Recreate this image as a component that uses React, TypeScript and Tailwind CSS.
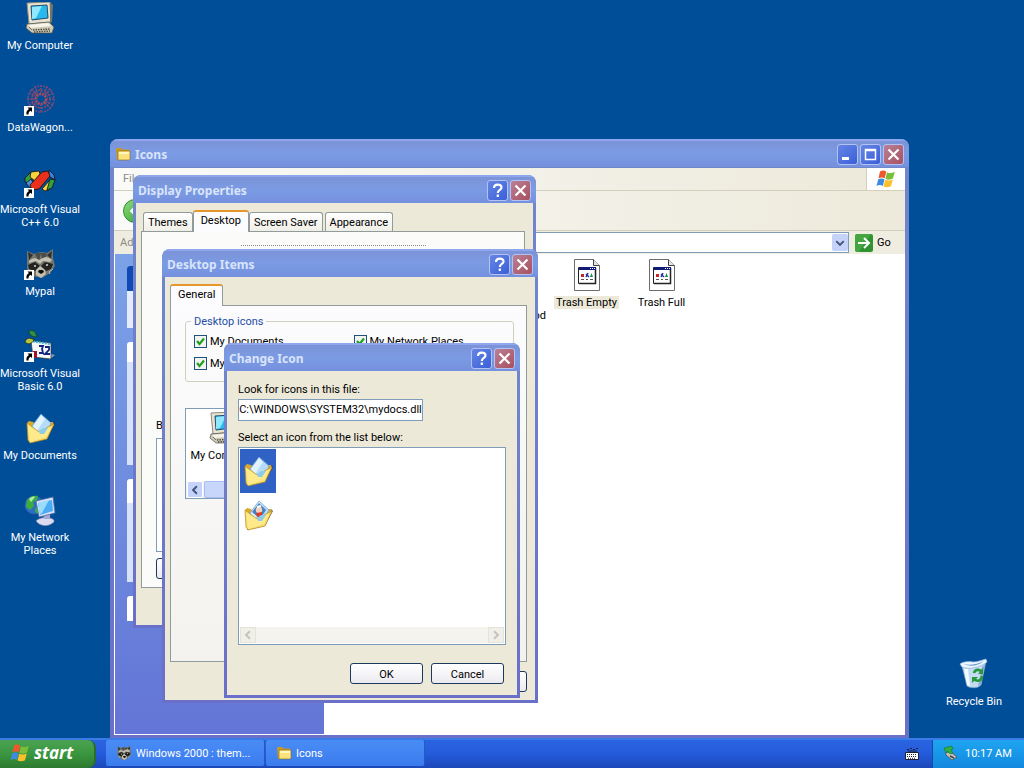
import React, { useState } from 'react';
import clsx from 'clsx';

type IconProps = { className?: string };

function ComputerIcon({ className }: IconProps) {
  return (
    <svg viewBox="0 0 32 32" className={className} aria-hidden="true">
      <path d="M3 1l23-1 1 20-22 2z" fill="#e8e4d2" stroke="#8d8a7c" strokeWidth="1" />
      <path d="M26 0l3 3-1 17-2 1z" fill="#77756a" />
      <path d="M7 4l16-1 1 13-16 2z" fill="#28b9ee" stroke="#2b4a68" strokeWidth="1" />
      <path d="M8 5l10-1-6 12-4 1z" fill="#8fe8fb" />
      <path d="M3 22l22-2 5 5-2 6-20 0-6-5z" fill="#cfcab5" stroke="#55534a" strokeWidth=".7" />
      <path d="M4 23l20-2 3 3-20 2z" fill="#f7f5ea" />
      <path d="M9 28l17-1M10 30l16-1" stroke="#4b4a45" strokeWidth="1.4" strokeDasharray="1.5 1" />
      <path d="M5 25l3 3" stroke="#77756a" />
    </svg>
  );
}

function DocumentsIcon({ className, picture = false }: IconProps & { picture?: boolean }) {
  return (
    <svg viewBox="0 0 32 32" className={className} aria-hidden="true">
      <path d="M5 31l18-4 8-15-2-2-7 15-17 4z" fill="#1d2430" opacity=".7" />
      <path d="M3 11l2-2 4 1 2 2 10-2 8 0 1 3-8 12-17 4z" fill="#dba92e" />
      <path d="M8 14l9-12 10 9-6 14-12-3z" fill="#b5dcf8" stroke="#6d9fd0" strokeWidth=".7" />
      <path d="M9 14l8-11 4 4-8 12z" fill="#e0f3ff" />
      {picture && (
        <g>
          <path d="M10 13l7-9 7 7-6 9z" fill="#477fc0" />
          <circle cx="17" cy="11" r="3.2" fill="#f3d3c0" />
          <path d="M14 14l6-1 0 4-4 2z" fill="#dd3b26" />
          <path d="M15 8l4-1" stroke="#fff" strokeWidth="2" />
        </g>
      )}
      <path d="M3 11l1 17 2 3 17-4 7-15-8 4-3 4-4 0z" fill="#f9dc6c" stroke="#b98d22" strokeWidth=".7" />
      <path d="M4 13l10 7 5 1 3-4 6-3-6 11-16 5z" fill="#ffee94" opacity=".8" />
      <path d="M15 19l4-3 5 0-4 6-4 0z" fill="#8fcbe8" />
    </svg>
  );
}

function NetworkIcon({ className }: IconProps) {
  return (
    <svg viewBox="0 0 32 32" className={className} aria-hidden="true">
      <circle cx="10" cy="11" r="9.5" fill="#2b6cc8" stroke="#123f87" strokeWidth=".6" />
      <path d="M3 6c3-4 8-5 11-4l-1 4-4 2 1 4-4 4-4-3zM11 14l5-2 2 5-4 3-3-2z" fill="#3eac3c" />
      <path d="M5 5c2-2 4-3 6-2L7 8z" fill="#a9ecaa" />
      <path d="M12 27c3-4 14-5 18-1l0 2c-5 5-14 5-18-1z" fill="#dcdcf0" stroke="#7175a5" strokeWidth=".6" />
      <path d="M19 19l7 0 0 6-6 0z" fill="#a5a8d0" />
      <path d="M12 7l17-4 2 16-16 4z" fill="#d8e3f7" stroke="#4d6da5" strokeWidth=".8" />
      <path d="M14 9l14-3 1 11-13 4z" fill="#4cabf5" />
      <path d="M14 9l11-3-7 13-2 1z" fill="#9bdcfb" />
    </svg>
  );
}

function RecycleIcon({ className }: IconProps) {
  return (
    <svg viewBox="0 0 32 32" className={className} aria-hidden="true">
      <path d="M4 8l24-5-5 24c-4 4-11 3-14 1z" fill="#c4dcf2" stroke="#87a9ce" strokeWidth=".6" />
      <path d="M2 6c2-2 8-3 13-2 4 0 9-2 13-3l1 3c-6 5-18 8-25 5z" fill="#eef7ff" stroke="#8fb4dc" strokeWidth=".7" />
      <path d="M6 6c5 2 14 0 20-3-5 5-15 6-20 3z" fill="#6b9cd0" />
      <path d="M6 11l4 0 2 17-3-1z" fill="#f4faff" />
      <path d="M24 9l3-3-4 21-3 1z" fill="#8caed0" />
      <g fill="none" stroke="#27983c" strokeWidth="2.6">
        <path d="M16 15c1-4 6-4 8-1" />
        <path d="M24 18c0 5-5 6-8 3" />
      </g>
      <path d="M25 10v6h-5zM14 25v-6h6z" fill="#27983c" />
    </svg>
  );
}

function RaccoonIcon({ className }: IconProps) {
  return (
    <svg viewBox="0 0 32 32" className={className} aria-hidden="true">
      <path d="M3 3l7 3c4-2 10-2 13-1l6-4 0 9 2 8-5 7-8 5-9-2-6-7 0-7z" fill="#77766c" />
      <path d="M4 4l5 3-4 5zM28 3l-5 4 4 4z" fill="#30312f" />
      <path d="M11 6l4 8 2-9 2 9 4-8-2-1-8 0z" fill="#4c4d49" />
      <path d="M5 13c4-4 7-3 10-1l2-1c4-3 9-2 11 1l-2 2-7-1-3 3-4-3-7 2z" fill="#c4c1b2" />
      <path d="M4 17l7-3 5 4-5 5-6-2zM29 16l-8-2-4 4 5 5 5-2z" fill="#222322" />
      <circle cx="11" cy="18" r="1" fill="#d9d9d9" />
      <circle cx="23" cy="17" r="1" fill="#d9d9d9" />
      <path d="M12 22l4-4 5 4 1 4-5 4-5-3z" fill="#c3c0b0" />
      <path d="M15 22h4l1 2-3 2-3-2z" fill="#0c0c0c" />
      <path d="M4 22l4 1-1 3M29 21l-4 3 1 2" stroke="#c2bfb1" fill="none" />
    </svg>
  );
}

function DataWagonIcon({ className }: IconProps) {
  return (
    <svg viewBox="0 0 32 32" className={className} aria-hidden="true" fill="none">
      <g stroke="#8f4668" strokeWidth="1.6" strokeDasharray="2 1">
        <circle cx="17" cy="15" r="5" stroke="#b84a58" strokeWidth="2.6" />
        <circle cx="17" cy="15" r="9" />
        <circle cx="17" cy="15" r="13" stroke="#6c4d83" />
      </g>
      <path
        d="M17 1v9M17 20v9M3 15h9M22 15h9M7 5l6 6M21 19l6 6M27 5l-6 6M7 25l6-6M11 2l3 9M23 2l-3 9M5 9l8 4M29 9l-8 4M5 21l8-4M29 21l-8-4"
        stroke="#7d4a76"
        strokeWidth="1.5"
        strokeDasharray="2 1"
      />
    </svg>
  );
}

function VisualCppIcon({ className }: IconProps) {
  return (
    <svg viewBox="0 0 32 32" className={className} aria-hidden="true" stroke="#111" strokeWidth=".8">
      <path d="M1 12l6-6 3 3-4 8-5-1z" fill="#37a03c" />
      <path d="M7 6l8-1 1 3-5 7-5-4z" fill="#f4d33c" />
      <path d="M2 17l5-4 3 5-4 4z" fill="#4d91e0" />
      <path d="M18 23l8-9 3 4-4 6-4 1z" fill="#f4d33c" />
      <path d="M25 4l5 5 1 5-6-4z" fill="#3f86dc" />
      <path d="M26 13l5 1-3 8-5 2z" fill="#37a03c" />
      <path d="M6 19L18 6l6-1 2 5-11 13-7 1z" fill="#e8301c" />
    </svg>
  );
}

function VisualBasicIcon({ className }: IconProps) {
  return (
    <svg viewBox="0 0 32 32" className={className} aria-hidden="true">
      <path d="M25 30l6-5-4-1z" fill="#99a" />
      <path d="M7 11l20 2v16l-18-2z" fill="#f6f8fb" stroke="#333" strokeWidth=".7" />
      <path d="M6 11l20 3" stroke="#4ab6d6" strokeWidth="2" strokeDasharray="2 1" />
      <path d="M5 1c4-2 7 1 8 6-5 0-8-2-8-6z" fill="#2f8f46" stroke="#113a1a" strokeWidth=".8" />
      <path d="M1 12c1-4 5-5 9-2-2 4-6 5-9 2z" fill="#b7c63c" stroke="#263311" strokeWidth=".8" />
      <path d="M9 21h4v7H9z" fill="#a3142c" />
      <path d="M15 16h4l-1 3 1 4h-4M21 17h4v3l-4 4h5" stroke="#15257f" strokeWidth="1.8" fill="none" />
    </svg>
  );
}

function FolderIcon({ className }: IconProps) {
  return (
    <svg viewBox="0 0 16 16" className={className} aria-hidden="true">
      <path d="M1 3l1-1h4l1.500 1.500h6l1 1V14H2z" fill="#c99b25" />
      <path d="M3 5h12v8l-1 1H3z" fill="#fbe27c" stroke="#8a6a14" strokeWidth=".6" />
      <path d="M4 6h10v2H4z" fill="#fff8bd" />
    </svg>
  );
}

function WindowsFlag({ className }: IconProps) {
  return (
    <svg viewBox="0 0 20 18" className={className} aria-hidden="true">
      <path d="M4 1.500c2-1.500 4.500-1.300 6.300 0L8.700 8.300c-2-1.200-4.200-1.200-6.200 0z" fill="#f0582b" />
      <path d="M11 2.200c2.500 1.200 5 1.200 7.800-.4L17 8.600c-2.500 1.300-5 1.400-7.600.2z" fill="#7cbd3a" />
      <path d="M2.200 9.300c2-1.200 4.300-1.200 6.300 0L6.900 16c-2-1.300-4.300-1.300-6.400 0z" fill="#3d8be0" />
      <path d="M9.200 9.700c2.500 1.100 5 1.100 7.600-.2L15 16.200c-2.400 1.300-5 1.300-7.500.2z" fill="#fbc12d" />
    </svg>
  );
}

function BitmapFileIcon({ className }: IconProps) {
  return (
    <svg viewBox="0 0 32 32" className={className} aria-hidden="true">
      <path d="M3.500.500h19l6 6v25h-25z" fill="#fff" stroke="#6c6c6c" />
      <path d="M22.500.500v6h6" fill="#e4e4e4" stroke="#444" />
      <path d="M7.500 8.500h17v16h-17z" fill="#fff" stroke="#222" />
      <path d="M24.500 9v15.500H8" stroke="#222" strokeWidth="1.500" fill="none" />
      <path d="M8 8h17v3H8z" fill="#101a78" />
      <path d="M19 9.500h5" stroke="#fff" strokeDasharray="1 1" />
      <path d="M10 15h3v3h-3z" fill="#c22a22" />
      <path d="M15 15l3 3M15 18l2-4" stroke="#2733a8" strokeWidth="1.500" />
      <path d="M19 18l1.500-4 1.500 4z" fill="#17924a" />
      <path d="M10 20.500h3M15 20.500h2M19 20.500h3" stroke="#555" />
    </svg>
  );
}

function ShortcutArrow() {
  return (
    <svg viewBox="0 0 10 10" className="absolute bottom-0 left-0 size-[10px]" aria-hidden="true">
      <path d="M0 0h10v10H0z" fill="#fff" />
      <path d="M3.500 1.500H8V6L6.500 4.700C5 5.500 4.500 6.500 4.500 8.500H2.500C2 6 3 4.300 5 3z" fill="#000" />
    </svg>
  );
}

function Chevron({ className }: IconProps) {
  return (
    <svg viewBox="0 0 8 8" className={className} fill="none" aria-hidden="true">
      <path d="M5.500 1L2.500 4l3 3" stroke="currentColor" strokeWidth="1.600" />
    </svg>
  );
}

const DESKTOP_ICONS = [
  { label: 'My Computer', Icon: ComputerIcon, shortcut: false },
  { label: 'DataWagon...', Icon: DataWagonIcon, shortcut: true },
  { label: 'Microsoft Visual\nC++ 6.0', Icon: VisualCppIcon, shortcut: true },
  { label: 'Mypal', Icon: RaccoonIcon, shortcut: true },
  { label: 'Microsoft Visual\nBasic 6.0', Icon: VisualBasicIcon, shortcut: true },
  { label: 'My Documents', Icon: DocumentsIcon, shortcut: false },
  { label: 'My Network\nPlaces', Icon: NetworkIcon, shortcut: false },
];

interface DesktopIconProps {
  label: string;
  Icon: React.ComponentType<IconProps>;
  shortcut?: boolean;
}

function DesktopIcon({ label, Icon, shortcut = false }: DesktopIconProps) {
  return (
    <button type="button" className="flex w-20 flex-col items-center gap-[5px] text-white">
      <span className="relative block size-8">
        <Icon className="size-8" />
        {shortcut && <ShortcutArrow />}
      </span>
      <span className="whitespace-pre">{label}</span>
    </button>
  );
}

type CaptionKind = 'help' | 'close' | 'min' | 'max';

function CaptionButton({ kind }: { kind: CaptionKind }) {
  return (
    <button
      type="button"
      aria-label={kind}
      className={clsx(
        'flex size-[21px] items-center justify-center rounded-[3px] border border-[#b3c1f3] text-white',
        kind === 'close' ? 'bg-linear-to-br from-[#b88098] to-[#a8505f]' : 'bg-linear-to-br from-[#6685e4] to-[#3a5fd8]'
      )}
    >
      <svg viewBox="0 0 19 19" className="size-[19px]" fill="none" stroke="currentColor" aria-hidden="true">
        {kind === 'close' && <path d="M4.500 4.500l10 10M14.500 4.500l-10 10" strokeWidth="2.200" />}
        {kind === 'min' && <path d="M4 13.500h7" strokeWidth="3" />}
        {kind === 'max' && <path d="M4.500 4.500h10v10h-10zM4 5.500h11" strokeWidth="1.500" />}
        {kind === 'help' && (
          <path d="M6 7c0-4.500 7.500-4.500 7.500-.5 0 2.500-3.700 2.500-3.700 5.500M9.800 13.500v2.500" strokeWidth="2.200" />
        )}
      </svg>
    </button>
  );
}

interface WindowProps {
  title: string;
  icon?: React.ReactNode;
  buttons: CaptionKind[];
  className: string;
  bodyClassName: string;
  children: React.ReactNode;
}

function Window({ title, icon, buttons, className, bodyClassName, children }: WindowProps) {
  return (
    <section
      aria-label={title}
      className={clsx('absolute flex flex-col overflow-hidden rounded-t-lg bg-linear-to-b from-[#7088cc] to-[#6a6fc8]', className)}
    >
      <header className="flex h-7 shrink-0 items-center gap-[2px] border-t-2 border-[#8ea6ee] bg-linear-to-b from-[#7c93d8] via-[#7b9be4] to-[#7590dd] pr-[5px] pl-[5px]">
        {icon}
        <h2 className="flex-1 pt-px font-['Noto_Sans',sans-serif] text-[12px] leading-4 font-bold text-[#d9e4fb]">{title}</h2>
        <div className="flex gap-[2px]">
          {buttons.map(b => (
            <CaptionButton key={b} kind={b} />
          ))}
        </div>
      </header>
      <div className={clsx('flex flex-1 flex-col', bodyClassName)}>{children}</div>
    </section>
  );
}

function PushButton({ children }: { children: React.ReactNode }) {
  return (
    <button
      type="button"
      className="h-[21px] w-[73px] rounded-[3px] border border-[#1c3a5e] bg-linear-to-b from-white to-[#eceaf0] pt-px text-black"
    >
      {children}
    </button>
  );
}

function TabStrip({ tabs, active }: { tabs: string[]; active: string }) {
  return (
    <div role="tablist" className="flex h-[21px] items-end">
      {tabs.map(tab => (
        <button
          key={tab}
          type="button"
          role="tab"
          aria-selected={tab === active}
          className={clsx(
            'rounded-t-[3px] border border-b-0 border-[#919b9c]',
            tab === active
              ? 'relative top-px -mr-[2px] h-[22px] border-t-2 border-t-[#e5972d] bg-[#fcfcfe] px-[7px] pb-[3px]'
              : 'ml-[2px] h-[19px] bg-linear-to-b from-white to-[#efeee6] px-1'
          )}
        >
          {tab}
        </button>
      ))}
    </div>
  );
}

function CheckBox({ label }: { label: string }) {
  const [checked, setChecked] = useState(true);
  return (
    <label className="flex h-[13px] items-center gap-[3px]">
      <span className="relative size-[13px]">
        <input
          type="checkbox"
          checked={checked}
          onChange={e => setChecked(e.target.checked)}
          className="block size-[13px] appearance-none border border-[#1c5180] bg-[#f3f3ef]"
        />
        {checked && (
          <svg viewBox="0 0 13 13" className="pointer-events-none absolute inset-0 size-[13px]" fill="none" aria-hidden="true">
            <path d="M3 6l2.500 3L10 3.500" stroke="#21a121" strokeWidth="2.200" />
          </svg>
        )}
      </span>
      {label}
    </label>
  );
}

function ExplorerWindow() {
  return (
    <Window
      title="Icons"
      icon={<FolderIcon className="mr-[2px] size-4" />}
      buttons={['min', 'max', 'close']}
      className="top-[139px] bottom-0 left-[110px] w-[799px]"
      bodyClassName="mt-px mx-1 mb-[3px] bg-[#efeddf]"
    >
      <div className="flex h-[23px] items-stretch border-b border-[#d2cfbd]">
        <span className="flex-1 bg-linear-to-r from-[#fafaf8] to-[#edeadb] py-1 pl-[9px] text-[#8a8a86]">File</span>
        <div className="flex w-[39px] items-center justify-center border-l border-[#d2cfbd] bg-white">
          <WindowsFlag className="h-[18px] w-5" />
        </div>
      </div>
      <div className="flex h-10 items-center border-b border-[#d2cfbd] bg-linear-to-r from-[#fafaf8] to-[#edeadb] pl-[9px]">
        <button type="button" aria-label="Back" className="flex size-6 items-center justify-center rounded-full border border-[#2c8a2c] bg-linear-to-br from-[#8cdc7c] to-[#2fa12c] text-white">
          <Chevron className="size-4" />
        </button>
      </div>
      <div className="flex h-[23px] items-center pl-[6px]">
        <label htmlFor="address" className="w-[50px] text-[#8a8a86]">Address</label>
        <div className="relative flex-1">
          <select id="address" className="block h-[21px] w-full appearance-none border border-[#7f9db9] bg-white" />
          <span className="pointer-events-none absolute top-[2px] right-px flex h-[17px] w-4 items-center justify-center rounded-[2px] bg-[#c5d3fa] text-[#41567d]">
            <Chevron className="size-[10px] -rotate-90" />
          </span>
        </div>
        <button type="button" className="flex w-14 items-center gap-1 pl-[6px]">
          <svg viewBox="0 0 18 18" className="size-[18px]" aria-hidden="true">
            <rect width="18" height="18" rx="2" fill="#2f9331" />
            <path d="M0 2l2-2h14L4 18H2l-2-2z" fill="#54b04c" opacity=".6" />
            <path d="M3 9h10M9 4l5 5-5 5" stroke="#fff" strokeWidth="2" fill="none" />
          </svg>
          Go
        </button>
      </div>
      <div className="flex flex-1 border-b border-l border-white bg-white">
        <aside className="flex w-[209px] flex-col gap-[14px] bg-linear-to-b from-[#7ba2e7] to-[#6375d6] px-3 pt-3">
          <div className="flex h-[62px] flex-col overflow-hidden rounded-t-[3px] bg-[#e3ebfc]">
            <div className="h-[25px] bg-[#1048b4]" />
          </div>
          <div className="h-[123px] rounded-t-[3px] border-t-[20px] border-white bg-[#d6e2fa]" />
          <div className="h-[103px] rounded-t-[3px] border-t-[24px] border-white bg-[#d6e2fa]" />
          <div className="h-[25px] rounded-t-[3px] bg-white" />
        </aside>
        <ul className="flex flex-1 justify-start pt-[5px] pl-[150px] text-center">
          <li className="flex w-[75px] flex-col items-end gap-[5px] pr-[3px]">
            <span className="size-8" />
            <span className="pt-[13px]">od</span>
          </li>
          {['Trash Empty', 'Trash Full'].map((name, i) => (
            <li key={name} className="flex w-[75px] flex-col items-center gap-[5px]">
              <BitmapFileIcon className="size-8" />
              <span className={clsx('px-[2px]', i === 0 && 'bg-[#ece9d8]')}>{name}</span>
            </li>
          ))}
        </ul>
      </div>
    </Window>
  );
}

function DisplayPropertiesWindow() {
  return (
    <Window
      title="Display Properties"
      buttons={['help', 'close']}
      className="top-[175px] left-[133px] w-[403px]"
      bodyClassName="mx-[3px] mb-[3px] bg-[#ece9d8] pt-[7px] pr-2 pl-[5px]"
    >
      <TabStrip tabs={['Themes', 'Desktop', 'Screen Saver', 'Appearance']} active="Desktop" />
      <div className="flex h-[357px] flex-col border border-[#919b9c] bg-[#fbfbf9] pt-[13px] pl-[14px]">
        <div className="ml-[85px] h-[174px] w-[185px] shrink-0 border-t border-dotted border-[#8a8a8a]" />
        <span>Background:</span>
        <div className="mt-[6px] h-[114px] w-[230px] border border-[#7f9db9] bg-white" />
        <div className="mt-[6px]">
          <PushButton>{null}</PushButton>
        </div>
      </div>
      <div className="flex justify-end pt-2 pb-2">
        <PushButton>{null}</PushButton>
      </div>
    </Window>
  );
}

function DesktopItemsWindow() {
  return (
    <Window
      title="Desktop Items"
      buttons={['help', 'close']}
      className="top-[249px] left-[162px] w-[376px]"
      bodyClassName="mx-[3px] mb-[3px] bg-[#ece9d8] pt-[7px] pr-2 pl-[5px]"
    >
      <TabStrip tabs={['General']} active="General" />
      <div className="flex h-[357px] flex-col border border-[#919b9c] bg-linear-to-b from-[#fcfcfe] to-[#f3f2ee] pt-[9px] pr-3 pl-[14px]">
        <fieldset className="rounded-[3px] border border-[#d0d0bf] pb-[11px] pl-2">
          <legend className="-ml-[3px] px-[3px] text-[#1c4da5]">Desktop icons</legend>
          <div className="grid grid-cols-2 gap-y-[9px] pt-[7px]">
            <CheckBox label="My Documents" />
            <CheckBox label="My Network Places" />
            <CheckBox label="My Computer" />
            <CheckBox label="Internet Explorer" />
          </div>
        </fieldset>
        <div className="mt-[26px] flex h-[91px] flex-col justify-between border border-[#7f9db9] bg-white">
          <div className="flex w-[75px] flex-col items-center gap-[5px] pt-[3px] whitespace-nowrap">
            <ComputerIcon className="size-8" />
            <span>My Computer</span>
          </div>
          <div className="flex h-[17px] gap-px bg-[#f3f3ef] px-px">
            <button type="button" aria-label="Scroll left" className="flex w-4 items-center justify-center rounded-[2px] border border-white bg-[#c5d3fa] text-[#41567d]">
              <Chevron className="size-[10px]" />
            </button>
            <div className="w-[150px] rounded-[2px] border border-[#a9bdf0] bg-[#c8d6fb]" />
          </div>
        </div>
      </div>
      <div className="flex justify-end pt-[9px] pb-2">
        <PushButton>{null}</PushButton>
      </div>
    </Window>
  );
}

function ChangeIconWindow() {
  const [path, setPath] = useState('C:\\WINDOWS\\SYSTEM32\\mydocs.dll');
  const [selected, setSelected] = useState(0);

  return (
    <Window
      title="Change Icon"
      buttons={['help', 'close']}
      className="top-[343px] left-[224px] w-[296px]"
      bodyClassName="mx-[3px] mb-[3px] bg-[#ece9d8] px-[11px] pt-3"
    >
      <label htmlFor="icon-file">Look for icons in this file:</label>
      <input
        id="icon-file"
        value={path}
        onChange={e => setPath(e.target.value)}
        className="mt-[3px] h-[22px] w-[185px] border border-[#7f9db9] bg-white px-0 pb-[2px] text-center"
      />
      <span className="mt-[10px]">Select an icon from the list below:</span>
      <div className="mt-[3px] flex h-[198px] flex-col border border-[#7f9db9] bg-white p-px">
        <div className="flex flex-1 flex-col items-start">
          {[false, true].map((picture, i) => (
            <button
              key={i}
              type="button"
              aria-label={picture ? 'My Pictures folder' : 'My Documents folder'}
              onClick={() => setSelected(i)}
              className={clsx('flex h-11 w-9 items-center justify-center', selected === i && 'bg-[#2f62c4]')}
            >
              <DocumentsIcon className="size-8" picture={picture} />
            </button>
          ))}
        </div>
        <div className="flex h-4 justify-between bg-[#f4f3ee] text-[#c4c3ba]">
          <span className="flex w-4 items-center justify-center border border-[#e6e4da] bg-[#f0efe8]">
            <Chevron className="size-[10px]" />
          </span>
          <span className="flex w-4 items-center justify-center border border-[#e6e4da] bg-[#f0efe8]">
            <Chevron className="size-[10px] rotate-180" />
          </span>
        </div>
      </div>
      <div className="flex justify-end gap-2 pt-[18px] pr-[2px] pb-[11px]">
        <PushButton>OK</PushButton>
        <PushButton>Cancel</PushButton>
      </div>
    </Window>
  );
}

function Taskbar() {
  return (
    <footer className="flex h-[30px] shrink-0 items-stretch border-t-2 border-[#3a7be8] bg-linear-to-b from-[#2a64e0] via-[#245bdb] to-[#1c48b8] text-white">
      <button
        type="button"
        className="mr-[10px] flex w-24 items-center gap-1 rounded-r-lg border-r-2 border-[#2c6b30] bg-linear-to-b from-[#4ba352] via-[#3a963e] to-[#2c7a30] pb-[2px] pl-[10px]"
      >
        <WindowsFlag className="h-[18px] w-5" />
        <span className="font-['Open_Sans',sans-serif] text-[17px] leading-5 font-bold italic">start</span>
      </button>
      <div className="flex flex-1 gap-px pb-[2px]">
        {[
          { label: 'Windows 2000 : them...', Icon: RaccoonIcon },
          { label: 'Icons', Icon: FolderIcon },
        ].map(({ label, Icon }) => (
          <button
            key={label}
            type="button"
            className="flex w-[159px] items-center gap-1 rounded-[2px] border-r border-[#2458c8] bg-linear-to-b from-[#4a8cf5] to-[#3a7cee] pl-[10px]"
          >
            <Icon className="size-4" />
            {label}
          </button>
        ))}
      </div>
      <div className="flex w-[27px] items-center">
        <svg viewBox="0 0 14 14" className="size-[14px]" aria-hidden="true">
          <path d="M2 2.500h2M5 1.500h2M8 2.500h2M11 1.500h2M3 4h9" stroke="#1b2238" />
          <path d="M.500 5.500h13v7H.500z" fill="#fff" stroke="#1b2238" />
          <path d="M2 7.500h10M2 9.500h10M3 11.300h8" stroke="#1b2238" strokeDasharray="1 1" />
        </svg>
      </div>
      <div className="flex w-[92px] items-center gap-[6px] border-l border-[#0c4ca8] bg-linear-to-b from-[#1fa5f0] to-[#1288df] pb-[2px] pl-[10px]">
        <svg viewBox="0 0 16 16" className="size-4" aria-hidden="true">
          <path d="M3 7l6 1 5 4-5 3-6-5z" fill="#c3c3bb" stroke="#3d4a4c" strokeWidth=".7" />
          <path d="M7 11l4 2" stroke="#444" strokeWidth="1.500" />
          <path d="M1 3l8-2 1 3-2 1 2 3-3 1-2-3-2 2z" fill="#2fb142" stroke="#14692a" strokeWidth=".5" />
        </svg>
        <span>10:17 AM</span>
      </div>
    </footer>
  );
}

export default function App() {
  return (
    <div className="flex h-screen flex-col overflow-hidden bg-[#004e98] font-['Roboto','DejaVu_Sans',sans-serif] text-[11px] leading-[13px] text-black">
      <main className="relative min-h-0 flex-1 overflow-hidden">
        <div className="grid auto-rows-[82px] items-start justify-start pt-[2px]">
          {DESKTOP_ICONS.map(item => (
            <DesktopIcon key={item.label} {...item} />
          ))}
        </div>
        <div className="absolute right-[10px] bottom-[30px]">
          <DesktopIcon label="Recycle Bin" Icon={RecycleIcon} />
        </div>
        <ExplorerWindow />
        <DisplayPropertiesWindow />
        <DesktopItemsWindow />
        <ChangeIconWindow />
      </main>
      <Taskbar />
    </div>
  );
}
